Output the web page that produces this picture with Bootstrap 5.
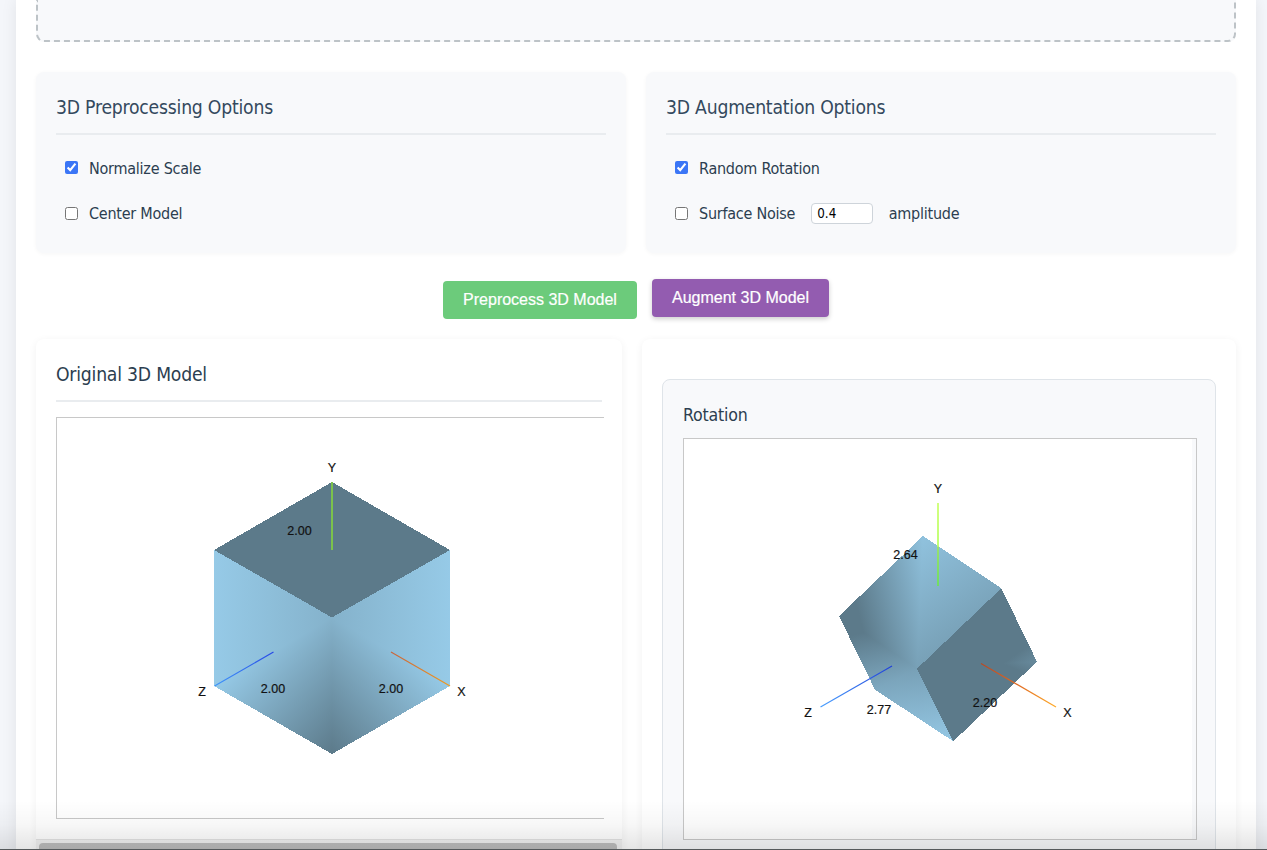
<!DOCTYPE html>
<html lang="en">
<head>
<meta charset="utf-8">
<meta name="viewport" content="width=device-width, initial-scale=1">
<title>3D Model Processing</title>
<link href="https://cdn.jsdelivr.net/npm/bootstrap@5.3.0/dist/css/bootstrap.min.css" rel="stylesheet">
<style>
body{background:#f4f6fa;color:#2c3e50;font-family:"DejaVu Sans Condensed","DejaVu Sans",sans-serif;font-stretch:condensed;font-size:16px;height:850px;overflow:hidden;position:relative}
.page-shell{width:1240px;height:870px;margin-left:16px;padding:0 20px;background:#fff;box-shadow:0 0 15px rgba(0,0,0,.08)}
.drop-zone{height:42px;border:2px dashed #bdc3c7;border-top:0;border-radius:0 0 8px 8px;background:#f8f9fb}
.option-grid{display:grid;grid-template-columns:1fr 1fr;gap:20px;margin-top:30px}
.option-box{height:181px;padding:20px;border-radius:8px;background:#f8f9fb;box-shadow:0 1px 4px rgba(0,0,0,.04)}
.panel-title{font-size:19.2px;line-height:30px;height:43px;padding-top:1px;border-bottom:2px solid #e9ecef;margin:0;font-weight:400;letter-spacing:-.22px;white-space:nowrap}
.option-box .panel-title{color:#34495e}
.option-list{padding-top:11px}
.option-row{height:45px;padding-left:9px;letter-spacing:-.24px}
.option-row input[type=checkbox]{width:13px;height:13px;margin:0 11px 0 0;accent-color:#3b76f6}
.option-row input[type=checkbox]:checked{margin-bottom:2px}
.amp-input{width:62px;height:21px;margin:0 15.5px 0 16px;border:1px solid #ced4da;border-radius:4px;background:#fff;padding:0 5px;font:13.3px "DejaVu Sans Condensed",sans-serif;letter-spacing:0;color:#000}
.run-btn{height:38px;padding:0 20px;border:0;border-radius:4px;color:#fff;font:16px/38px "Liberation Sans",Arial,sans-serif;-webkit-text-stroke:.2px #fff}
.run-btn.pre{background:#6ccb7b;margin-top:2px;width:194px}
.run-btn.aug{background:#935cb0;width:177px;box-shadow:0 2px 5px rgba(0,0,0,.2)}
.result-box{height:531px;border-radius:8px;background:#fff;box-shadow:0 2px 8px rgba(0,0,0,.06)}
.result-body{height:500px;padding:20px 18px 0 20px}
.view-frame{height:402px;border:1px solid #c8c8c8;background:#fff}
.view-frame svg{display:block}
.scroll-track{height:31px;background:#f0f0f0;border-top:1px solid #e3e3e3;padding:3px 5px 0 3px}
.scroll-thumb{height:14px;border-radius:4px 4px 0 0;background:#bdbdbd}
.rot-card{height:490px;border:1px solid #dfe4e9;border-radius:8px;background:#f8f9fb;padding:20px 18px 20px 20px}
.rot-title{height:38px;line-height:30px;font-size:17.6px;letter-spacing:-.2px}
.bottom-shade{position:absolute;left:0;right:0;bottom:0;height:50px;background:linear-gradient(rgba(0,0,0,0),rgba(0,0,0,.03) 50%,rgba(0,0,0,.1));border-bottom:1px solid #55595b}
svg text{font-family:"Liberation Sans",Arial,sans-serif;font-size:12.5px;fill:#111;stroke:#111;stroke-width:.2px;text-anchor:middle}
</style>
</head>
<body>
<main class="page-shell">
  <div class="drop-zone"></div>
  <section class="option-grid">
    <div class="option-box">
      <h3 class="panel-title">3D Preprocessing Options</h3>
      <div class="option-list">
        <label class="option-row d-flex align-items-center"><input type="checkbox" checked>Normalize Scale</label>
        <label class="option-row d-flex align-items-center"><input type="checkbox">Center Model</label>
      </div>
    </div>
    <div class="option-box">
      <h3 class="panel-title">3D Augmentation Options</h3>
      <div class="option-list">
        <label class="option-row d-flex align-items-center"><input type="checkbox" checked>Random Rotation</label>
        <div class="option-row d-flex align-items-center"><input type="checkbox" aria-label="Surface Noise">Surface Noise<input class="amp-input" type="text" value="0.4" aria-label="amplitude">amplitude</div>
      </div>
    </div>
  </section>
  <div class="d-flex justify-content-center align-items-start" style="gap:15px;height:60px;margin-top:26px">
    <button class="run-btn pre">Preprocess 3D Model</button>
    <button class="run-btn aug">Augment 3D Model</button>
  </div>
  <section class="d-flex" style="gap:20px">
    <div class="result-box flex-shrink-0" style="width:586px">
      <div class="result-body">
        <h3 class="panel-title" style="margin-right:2px">Original 3D Model</h3>
        <div class="view-frame border-end-0" style="margin-top:15px">
          <svg width="547" height="400" viewBox="57 418 547 400">
            <g id="cubeA" shape-rendering="crispEdges"></g>
            <path d="M332 482V550" stroke="#7bc24c" stroke-width="2"/>
            <path d="M273.5 652L214.5 686" stroke="url(#zAxisA)" stroke-width="1.2"/>
            <path d="M391 652L450 686" stroke="url(#xAxisA)" stroke-width="1.2"/>
            <text x="332" y="472">Y</text><text x="202" y="696">Z</text><text x="461.5" y="696">X</text>
            <text x="299.5" y="535">2.00</text><text x="273" y="693">2.00</text><text x="391" y="693">2.00</text>
            <defs>
              <linearGradient id="zAxisA"><stop stop-color="#3f96fa"/><stop offset="1" stop-color="#2849e6"/></linearGradient>
              <linearGradient id="xAxisA"><stop stop-color="#c8643c"/><stop offset="1" stop-color="#f09a1e"/></linearGradient>
            </defs>
          </svg>
        </div>
      </div>
      <div class="scroll-track"><div class="scroll-thumb"></div></div>
    </div>
    <div class="result-box flex-grow-1" style="padding:40px 20px 0">
      <div class="rot-card">
        <div class="rot-title">Rotation</div>
        <div class="view-frame" style="width:514px;background:linear-gradient(90deg,#fff 508px,#f8f9fb 508px)">
          <svg width="508" height="400" viewBox="684 439 508 400">
            <g id="cubeB" shape-rendering="crispEdges"></g>
            <path d="M937 503h2v83h-2z" fill="url(#yAxisB)"/>
            <path d="M892 666L820.5 707" stroke="url(#zAxisB)" stroke-width="1.2"/>
            <path d="M981 663.5L1056 707" stroke="url(#xAxisB)" stroke-width="1.2"/>
            <text x="938" y="493">Y</text><text x="808" y="717">Z</text><text x="1067.5" y="717">X</text>
            <text x="905.5" y="559">2.64</text><text x="879" y="714">2.77</text><text x="985" y="707">2.20</text>
            <defs>
              <linearGradient id="yAxisB" gradientUnits="userSpaceOnUse" x1="0" y1="503" x2="0" y2="586"><stop stop-color="#d2ff80"/><stop offset=".52" stop-color="#c0ff75"/><stop offset=".53" stop-color="#98e070"/><stop offset="1" stop-color="#70dd62"/></linearGradient>
              <linearGradient id="zAxisB"><stop stop-color="#4aa0ff"/><stop offset="1" stop-color="#2040d8"/></linearGradient>
              <linearGradient id="xAxisB"><stop stop-color="#b84824"/><stop offset=".5" stop-color="#e06c24"/><stop offset="1" stop-color="#ffab28"/></linearGradient>
            </defs>
          </svg>
        </div>
      </div>
    </div>
  </section>
</main>
<div class="bottom-shade"></div>
<script src="https://cdn.jsdelivr.net/npm/bootstrap@5.3.0/dist/js/bootstrap.bundle.min.js"></script>
<script>
// Each triangle is [[x, y, light] * 3]; light 0 is ambient, 1 is fully lit.
const meshes = {
  cubeA: [
    [[214,550,0],[332,482,0],[450,550,0]], [[214,550,0],[450,550,0],[332,617.5,0]],
    [[214,550,1],[332,617.5,.7],[214,686,1]], [[214,686,1],[332,617.5,.7],[332,754,0]],
    [[450,550,1],[332,617.5,.7],[450,686,1]], [[450,686,1],[332,617.5,.7],[332,754,0]]
  ],
  cubeB: [
    [[923,536,.9],[839,616,-.22],[917,668.7,.48]], [[923,536,.9],[917,668.7,.48],[1001.3,588.3,.55]],
    [[839,616,-.22],[917,668.7,.48],[875,689.7,.58]], [[875,689.7,.58],[917,668.7,.48],[953.3,741.3,.97]],
    [[1001.3,588.3,-.7],[1037,661.7,.2],[917,668.7,-.5]], [[1037,661.7,.2],[917,668.7,-.5],[953.3,741.3,-1.2]]
  ]
};
for (const [id, tris] of Object.entries(meshes)) {
  let out = '';
  tris.forEach((t, i) => {
    const [[x0,y0,v0],[x1,y1,v1],[x2,y2,v2]] = t;
    const d = (x1-x0)*(y2-y0) - (x2-x0)*(y1-y0);
    const gx = ((v1-v0)*(y2-y0) - (v2-v0)*(y1-y0)) / d;
    const gy = ((x1-x0)*(v2-v0) - (x2-x0)*(v1-v0)) / d;
    const g = gx*gx + gy*gy;
    let fill = '#5c7a8a';
    if (g > 0) {
      const ax = x0 - v0*gx/g, ay = y0 - v0*gy/g;
      out += `<linearGradient id="${id}g${i}" gradientUnits="userSpaceOnUse" x1="${ax}" y1="${ay}" x2="${ax+gx/g}" y2="${ay+gy/g}"><stop stop-color="#5c7a8a"/><stop offset="1" stop-color="#96cae7"/></linearGradient>`;
      fill = `url(#${id}g${i})`;
    }
    out += `<polygon points="${x0},${y0} ${x1},${y1} ${x2},${y2}" fill="${fill}"/>`;
  });
  document.getElementById(id).innerHTML = out;
}
</script>
</body>
</html>
